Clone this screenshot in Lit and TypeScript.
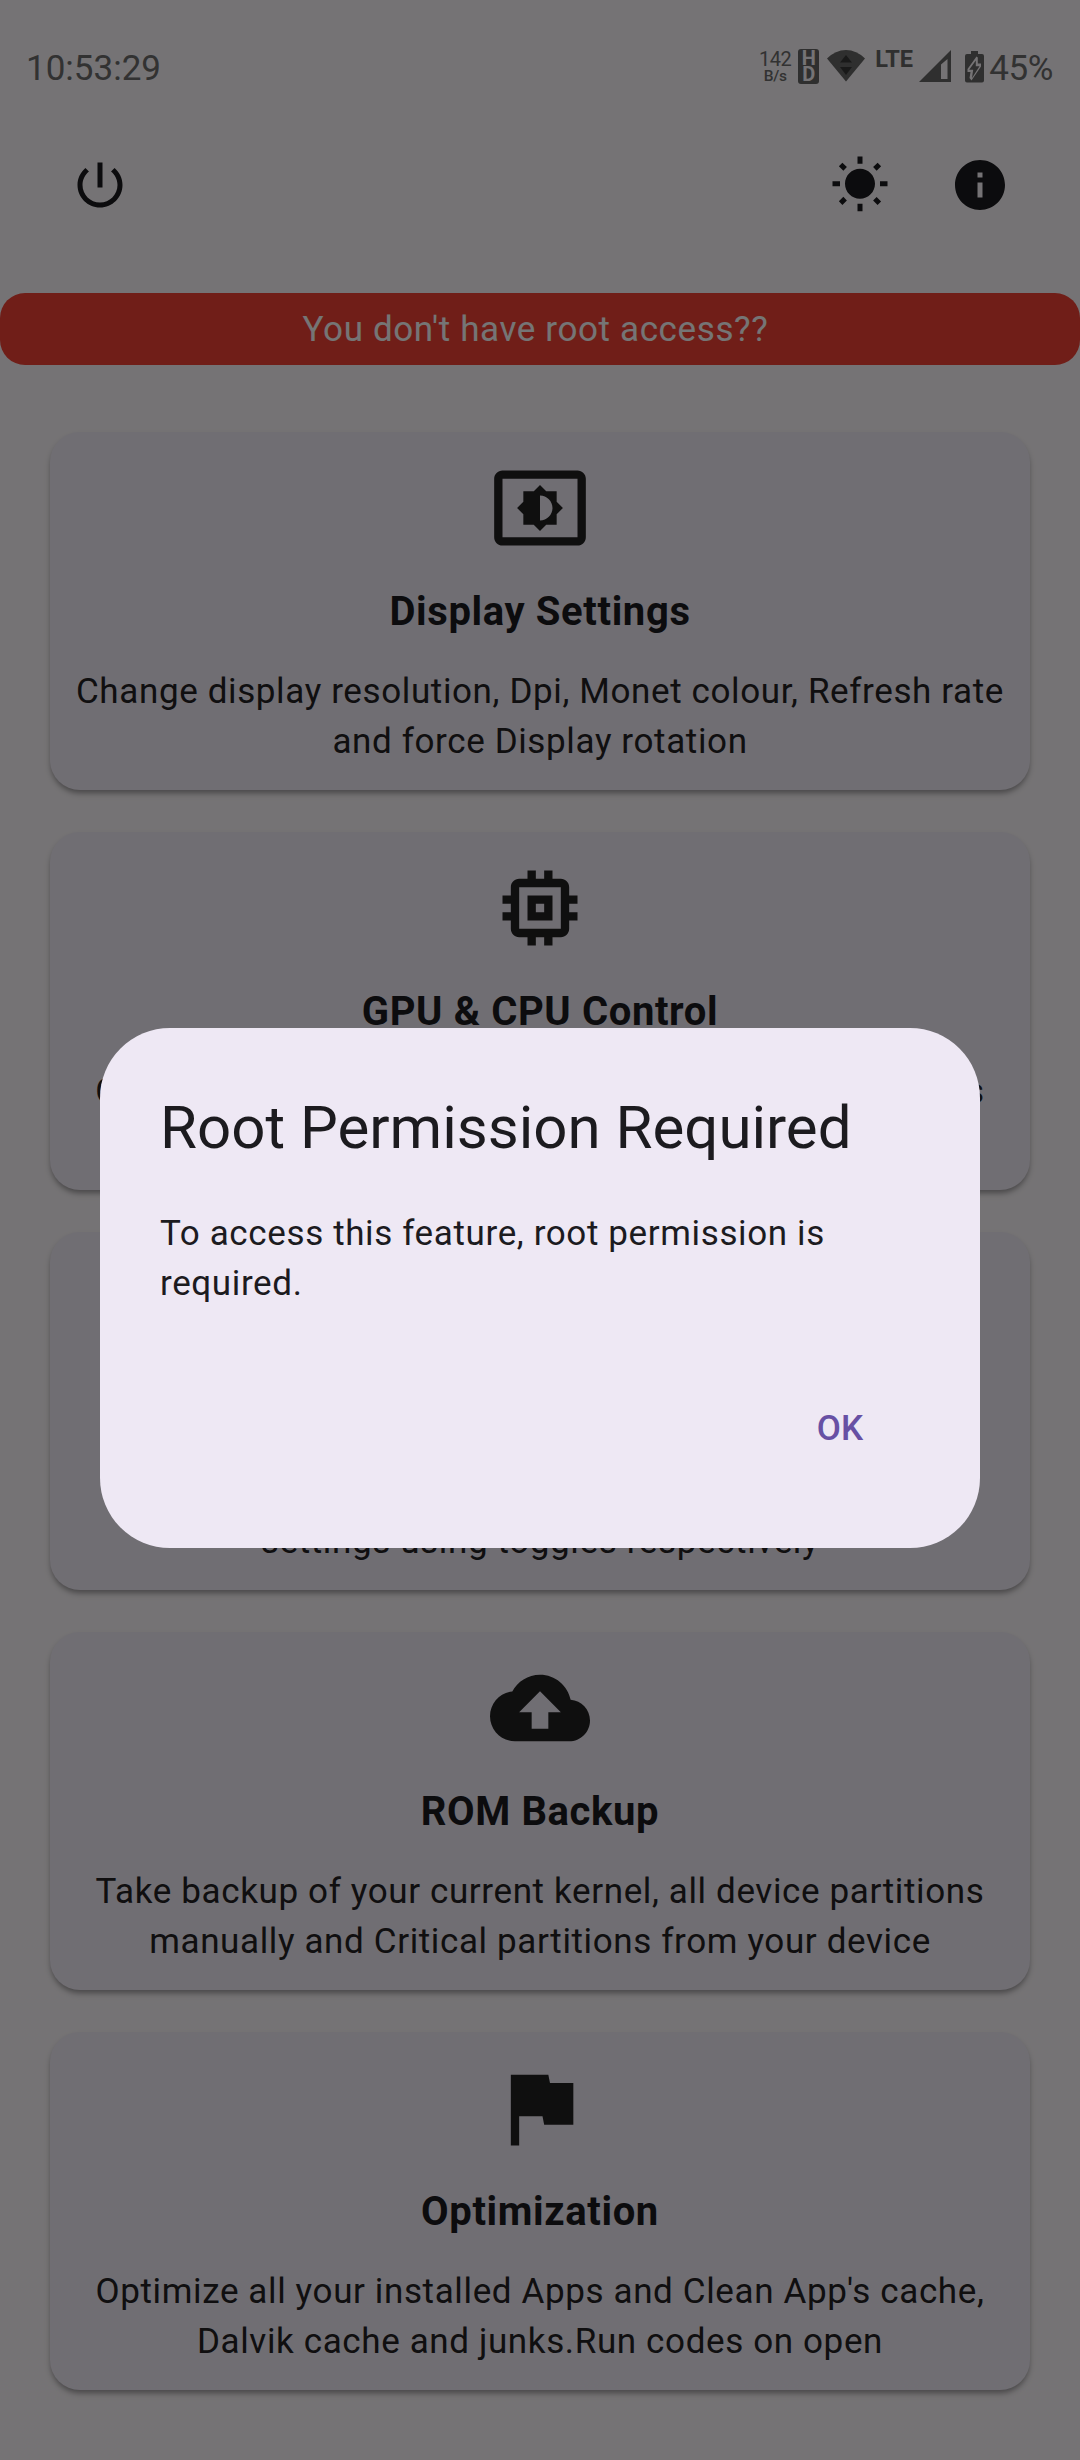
import { LitElement, html, css, svg } from "lit";
import { customElement } from "lit/decorators.js";

const path = (d: string, cls: string) =>
  html`<svg class=${cls} viewBox="0 0 24 24"><path d=${d} /></svg>`;

const ICONS = {
  power:
    "M13 3h-2v10h2V3zm4.83 2.17l-1.42 1.42C17.99 7.86 19 9.81 19 12c0 3.87-3.13 7-7 7s-7-3.13-7-7c0-2.19 1.01-4.14 2.58-5.42L6.17 5.17C4.23 6.82 3 9.26 3 12c0 4.97 4.03 9 9 9s9-4.03 9-9c0-2.74-1.23-5.18-3.17-6.83z",
  sun:
    "M6.76 4.84l-1.8-1.79-1.41 1.41 1.79 1.79 1.42-1.41zM4 10.5H1v2h3v-2zm9-9.95h-2V3.5h2V.55zm7.45 3.91l-1.41-1.41-1.79 1.79 1.41 1.41 1.79-1.79zm-3.21 13.7l1.79 1.8 1.41-1.41-1.8-1.79-1.4 1.4zM20 10.5v2h3v-2h-3zm-8-5c-3.31 0-6 2.69-6 6s2.69 6 6 6 6-2.69 6-6-2.69-6-6-6zm-1 16.95h2V19.5h-2v2.95zm-7.45-3.91l1.41 1.41 1.79-1.8-1.41-1.41-1.79 1.8z",
  info:
    "M12 2C6.48 2 2 6.48 2 12s4.48 10 10 10 10-4.48 10-10S17.52 2 12 2zm1 15h-2v-6h2v6zm0-8h-2V7h2v2z",
  display:
    "M21 3H3c-1.1 0-2 .9-2 2v14c0 1.1.9 2 2 2h18c1.1 0 2-.9 2-2V5c0-1.1-.9-2-2-2zm0 16.01H3V4.99h18v14.02zM8 16h2.5l1.5 1.5 1.5-1.5H16v-2.5l1.5-1.5-1.5-1.5V8h-2.5L12 6.5 10.5 8H8v2.5L6.5 12 8 13.5V16zm4-7c1.66 0 3 1.34 3 3s-1.34 3-3 3V9z",
  memory:
    "M15 9H9v6h6V9zm-2 4h-2v-2h2v2zm8-2V9h-2V7c0-1.1-.9-2-2-2h-2V3h-2v2h-2V3H9v2H7c-1.1 0-2 .9-2 2v2H3v2h2v2H3v2h2v2c0 1.1.9 2 2 2h2v2h2v-2h2v2h2v-2h2c1.1 0 2-.9 2-2v-2h2v-2h-2v-2h2zm-4 6H7V7h10v10z",
  toggle:
    "M17 7H7c-2.76 0-5 2.24-5 5s2.24 5 5 5h10c2.76 0 5-2.24 5-5s-2.24-5-5-5zm0 8c-1.66 0-3-1.34-3-3s1.34-3 3-3 3 1.34 3 3-1.34 3-3 3z",
  backup:
    "M19.35 10.04C18.67 6.59 15.64 4 12 4 9.11 4 6.6 5.64 5.35 8.04 2.34 8.36 0 10.91 0 14c0 3.31 2.69 6 6 6h13c2.76 0 5-2.24 5-5 0-2.64-2.05-4.78-4.65-4.96zM14 13v4h-4v-4H7l5-5 5 5h-3z",
  flag: "M14.4 6L14 4H5v17h2v-7h5.6l.4 2h7V6z",
};

interface Feature {
  icon: string;
  title: string;
  lines: string[];
}

const FEATURES: Feature[] = [
  {
    icon: ICONS.display,
    title: "Display Settings",
    lines: ["Change display resolution, Dpi, Monet colour, Refresh rate", "and force Display rotation"],
  },
  {
    icon: ICONS.memory,
    title: "GPU & CPU Control",
    lines: ["Change Governors and frequencies of CPU, GPU blocks", "and thermal profiles"],
  },
  {
    icon: ICONS.toggle,
    title: "Device Settings",
    lines: ["Enable or disable hidden system", "settings using toggles respectively"],
  },
  {
    icon: ICONS.backup,
    title: "ROM Backup",
    lines: ["Take backup of your current kernel, all device partitions", "manually and Critical partitions from your device"],
  },
  {
    icon: ICONS.flag,
    title: "Optimization",
    lines: ["Optimize all your installed Apps and Clean App's cache,", "Dalvik cache and junks.Run codes on open"],
  },
];

@customElement("status-bar")
class StatusBar extends LitElement {
  static styles = css`
    :host {
      display: flex;
      justify-content: space-between;
      align-items: flex-start;
      box-sizing: border-box;
      height: 125px;
      padding: 47px 27px 0 26px;
      color: #6e6e6e;
      font-size: 35px;
      line-height: 43px;
    }
    .tray {
      display: flex;
      align-items: flex-start;
    }
    .speed {
      width: 34px;
      margin-right: 6px;
      padding-top: 3px;
      text-align: center;
      font-size: 20px;
      line-height: 18px;
      letter-spacing: -0.5px;
    }
    .unit {
      font-size: 15.5px;
      font-weight: 500;
      line-height: 17px;
      letter-spacing: -0.3px;
    }
    .hd {
      display: flex;
      flex-direction: column;
      align-items: center;
      width: 21px;
      height: 31px;
      margin: 2px 8px 0 0;
      padding: 2px 0;
      border-radius: 3px;
      background: #666;
      color: #fffbfe;
      font-size: 20px;
      font-weight: 700;
      line-height: 15.5px;
    }
    .wifi {
      width: 38px;
      height: 32px;
      margin: 3px 10px 0 0;
    }
    .lte {
      width: 38px;
      margin-right: 6px;
      font-size: 23.5px;
      font-weight: 700;
      line-height: 24px;
      letter-spacing: -0.1px;
      color: #666;
    }
    .signal {
      width: 32px;
      height: 32px;
      margin: 3px 14px 0 0;
    }
    .battery {
      width: 19px;
      height: 32px;
      margin: 4px 5px 0 0;
    }
    .level {
      letter-spacing: -0.4px;
    }
    .ink {
      fill: #666;
    }
    .dark {
      fill: #383838;
    }
    .clear {
      fill: #fffbfe;
    }
  `;

  render() {
    return html`
      <div>10:53:29</div>
      <div class="tray">
        <div class="speed">142<div class="unit">B/s</div></div>
        <div class="hd"><span>H</span><span>D</span></div>
        <svg class="wifi" viewBox="0 0 38 32">
          ${svg`<path class="ink" d="M19 31.500L0 8.500Q8.500 0 19 0T38 8.500Z"/>
          <path class="dark" d="M19 5l6 7.500H13zM13 17h12l-6 8z"/>`}
        </svg>
        <div class="lte">LTE</div>
        <svg class="signal" viewBox="0 0 32 32">
          ${svg`<path class="ink" fill-rule="evenodd" d="M32 0v32H0zM28.500 9L22 14.500V29h6.500z"/>`}
        </svg>
        <svg class="battery" viewBox="0 0 19 32">
          ${svg`<path class="ink" d="M6 0h7v3h4q2 0 2 2v24.500q0 2-2 2H2q-2 0-2-2V5q0-2 2-2h4z"/>
          <path class="clear" d="M11.500 5.500L2.500 18v3h3L4.500 27l2 2.500L16 15.500V12.500h-3.200V6.500z"/>
          <path class="ink" d="M10.800 9.500L4.200 18.800h4L7 27l7.500-11.800h-3.700z"/>`}
        </svg>
        <div class="level">45%</div>
      </div>
    `;
  }
}

@customElement("feature-card")
class FeatureCard extends LitElement {
  static properties = { feature: { attribute: false } };
  declare feature: Feature;

  static styles = css`
    :host {
      display: flex;
      flex-direction: column;
      align-items: center;
      box-sizing: border-box;
      height: 358px;
      padding-top: 26px;
      border-radius: 30px;
      background: #f4effa;
      box-shadow: 0 4px 5px -1px rgba(0, 0, 0, 0.28), 0 4px 8px -1px rgba(0, 0, 0, 0.14);
      text-align: center;
    }
    .icon {
      flex: none;
      width: 100px;
      height: 100px;
      fill: #222;
    }
    .title {
      margin-top: 24px;
      font-size: 40px;
      font-weight: 700;
      line-height: 60px;
      letter-spacing: 0.625px;
      color: #1c1b1f;
      white-space: nowrap;
    }
    .body {
      margin-top: 25px;
      font-size: 35px;
      line-height: 50px;
      letter-spacing: 0.625px;
      color: #232224;
      white-space: nowrap;
    }
  `;

  render() {
    return html`
      ${path(this.feature.icon, "icon")}
      <div class="title">${this.feature.title}</div>
      <div class="body">${this.feature.lines.map((l) => html`<div>${l}</div>`)}</div>
    `;
  }
}

@customElement("app-root")
class AppRoot extends LitElement {
  static styles = css`
    :host {
      display: block;
      position: relative;
      width: 1080px;
      height: 2460px;
      overflow: hidden;
      background: #fffbfe;
      font-family: Roboto, "Liberation Sans", sans-serif;
    }
    .header {
      display: flex;
      align-items: center;
      height: 120px;
      padding: 0 40px;
    }
    .action {
      display: flex;
      justify-content: center;
      width: 120px;
    }
    .action:first-child {
      margin-right: auto;
    }
    .glyph {
      width: 60px;
      height: 60px;
      fill: #1c1b1f;
    }
    .banner {
      box-sizing: border-box;
      height: 72.5px;
      margin-top: 47.5px;
      padding-right: 9px;
      border-radius: 25px;
      background: #f44336;
      color: #fff;
      font-size: 35px;
      line-height: 74px;
      letter-spacing: 0.625px;
      text-align: center;
    }
    .cards {
      display: flex;
      flex-direction: column;
      gap: 42px;
      padding: 67px 50px 0;
    }
    .scrim {
      position: absolute;
      inset: 0;
      display: flex;
      align-items: flex-start;
      justify-content: center;
      padding-top: 1027.5px;
      background: rgba(0, 0, 0, 0.54);
    }
    .dialog {
      box-sizing: border-box;
      width: 880px;
      height: 520px;
      padding: 60px;
      border-radius: 70px;
      background: #eee8f4;
      color: #1c1b1f;
    }
    .heading {
      font-size: 60px;
      line-height: 80px;
    }
    .message {
      margin-top: 41px;
      font-size: 35px;
      line-height: 50px;
      letter-spacing: 0.625px;
    }
    .buttons {
      display: flex;
      justify-content: flex-end;
      margin-top: 60px;
    }
    .ok {
      width: 160px;
      line-height: 120px;
      text-align: center;
      font-size: 35px;
      font-weight: 500;
      letter-spacing: 0.25px;
      color: #6750a4;
    }
  `;

  render() {
    return html`
      <status-bar></status-bar>
      <div class="header">
        <div class="action">${path(ICONS.power, "glyph")}</div>
        <div class="action">${path(ICONS.sun, "glyph")}</div>
        <div class="action">${path(ICONS.info, "glyph")}</div>
      </div>
      <div class="banner">You don't have root access??</div>
      <div class="cards">
        ${FEATURES.map((f) => html`<feature-card .feature=${f}></feature-card>`)}
      </div>
      <div class="scrim">
        <div class="dialog">
          <div class="heading">Root Permission Required</div>
          <div class="message">To access this feature, root permission is required.</div>
          <div class="buttons"><div class="ok">OK</div></div>
        </div>
      </div>
    `;
  }
}
